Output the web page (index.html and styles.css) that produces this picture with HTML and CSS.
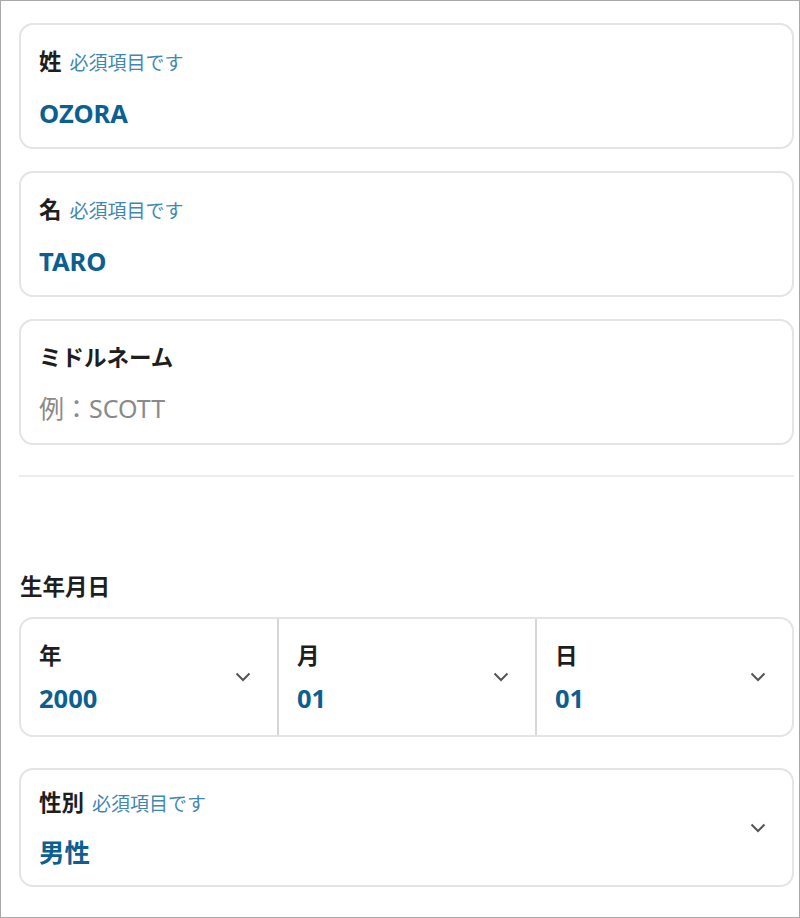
FILE: index.html
```html
<!DOCTYPE html>
<html lang="ja">
<head>
<meta charset="utf-8">
<title>Form</title>
<link rel="stylesheet" href="styles.css">
</head>
<body>
<div class="frame">
  <div class="stack">
    <div class="field">
      <div class="label">姓<span class="req">必須項目です</span></div>
      <div class="value">OZORA</div>
    </div>
    <div class="field">
      <div class="label">名<span class="req">必須項目です</span></div>
      <div class="value">TARO</div>
    </div>
    <div class="field">
      <div class="label">ミドルネーム</div>
      <div class="value placeholder">例：SCOTT</div>
    </div>
  </div>

  <hr class="divider">

  <div class="section-title">生年月日</div>
  <div class="date-group">
    <div class="date-col">
      <div class="col-text">
        <div class="label">年</div>
        <div class="value">2000</div>
      </div>
      <svg class="chev" width="16" height="10" viewBox="0 0 16 10"><polyline points="1.5,1.5 8,8 14.5,1.5" fill="none" stroke="#555" stroke-width="2"/></svg>
    </div>
    <div class="date-col">
      <div class="col-text">
        <div class="label">月</div>
        <div class="value">01</div>
      </div>
      <svg class="chev" width="16" height="10" viewBox="0 0 16 10"><polyline points="1.5,1.5 8,8 14.5,1.5" fill="none" stroke="#555" stroke-width="2"/></svg>
    </div>
    <div class="date-col">
      <div class="col-text">
        <div class="label">日</div>
        <div class="value">01</div>
      </div>
      <svg class="chev" width="16" height="10" viewBox="0 0 16 10"><polyline points="1.5,1.5 8,8 14.5,1.5" fill="none" stroke="#555" stroke-width="2"/></svg>
    </div>
  </div>

  <div class="field select gender">
    <div class="col-text">
      <div class="label">性別<span class="req">必須項目です</span></div>
      <div class="value">男性</div>
    </div>
    <svg class="chev" width="16" height="10" viewBox="0 0 16 10"><polyline points="1.5,1.5 8,8 14.5,1.5" fill="none" stroke="#555" stroke-width="2"/></svg>
  </div>
</div>
</body>
</html>
```

FILE: styles.css
```css
* { box-sizing: border-box; }
html, body { margin: 0; padding: 0; background: #fff; }
body {
  font-family: "Noto Sans", "Noto Sans CJK JP", sans-serif;
  color: #222;
}
.frame {
  width: 800px;
  height: 918px;
  border: 1px solid #a8a8a8;
  padding: 22px 5px 0 18px;
}
.stack {
  display: flex;
  flex-direction: column;
  gap: 22px;
}
.field {
  border: 2px solid #e4e4e4;
  border-radius: 14px;
  padding: 22px 18px 18px;
  height: 126px;
}
.label {
  font-size: 22.5px;
  font-weight: 700;
  line-height: 30px;
  color: #1e1e1e;
  white-space: nowrap;
}
.req {
  font-size: 19px;
  font-weight: 400;
  color: #3f87b4;
  margin-left: 8px;
}
.value {
  font-size: 25.5px;
  font-weight: 700;
  line-height: 32px;
  color: #0b5f91;
  margin-top: 19px;
}
.value.placeholder {
  font-weight: 400;
  color: #8a8a8a;
  font-size: 25px;
}
.divider {
  border: 0;
  height: 2px;
  background: #ececec;
  margin: 30px 0 0;
}
.section-title {
  font-size: 22.5px;
  font-weight: 700;
  line-height: 30px;
  color: #1e1e1e;
  margin-top: 95px;
  padding-left: 1px;
}
.date-group {
  margin-top: 15px;
  display: grid;
  grid-template-columns: 256px 258px 1fr;
  border: 2px solid #e4e4e4;
  border-radius: 14px;
  height: 120px;
}
.date-col {
  display: flex;
  align-items: center;
  justify-content: space-between;
  padding: 0 26px 0 18px;
}
.date-col + .date-col {
  border-left: 2px solid #d6d6d6;
}
.date-col .value { margin-top: 11px; }
.chev { flex: none; }
.select {
  display: flex;
  align-items: center;
  justify-content: space-between;
  padding: 0 26px 0 18px;
}
.gender {
  margin-top: 31px;
  height: 119px;
}
.gender .value { margin-top: 17px; }
```
